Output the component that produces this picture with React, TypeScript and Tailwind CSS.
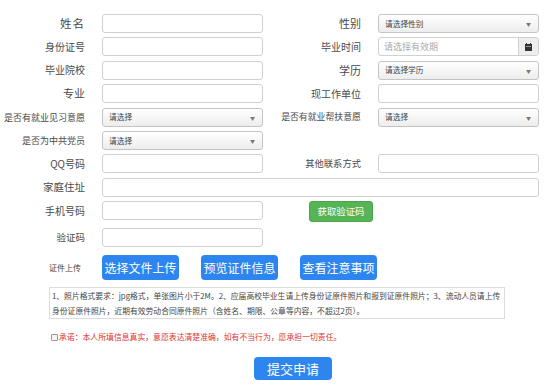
import React from 'react';

const FONT = { fontFamily: '"Noto Sans CJK SC", "Noto Sans", sans-serif' };

function Label({ text, size = 'text-[10px]', width = 'w-[85px]' }: { text: string; size?: string; width?: string }) {
  return (
    <div className={`${width} shrink-0 text-right whitespace-nowrap text-[#4a4a4a] leading-none ${size}`}>{text}</div>
  );
}

function TextInput({ width = 'w-[161px]' }: { width?: string }) {
  return <div className={`${width} h-[19px] shrink-0 ml-[17px] rounded-[3px] border border-[#d0d0d0] bg-white`} />;
}

function Select({ text }: { text: string }) {
  return (
    <div className="w-[161px] h-[19px] shrink-0 ml-[17px] rounded-[3px] border border-[#c4c4c4] bg-gradient-to-b from-white to-[#ededed] flex items-center justify-between pl-[6px] pr-[7px]">
      <span className="text-[7.7px] text-[#444] leading-none">{text}</span>
      <span className="text-[5px] text-[#777] leading-none">▼</span>
    </div>
  );
}

function DateInput() {
  return (
    <div className="w-[161px] h-[19px] shrink-0 ml-[17px] rounded-[3px] border border-[#d0d0d0] bg-white flex items-center overflow-hidden">
      <span className="flex-1 pl-[5px] text-[9px] text-[#aaa] leading-none">请选择有效期</span>
      <div className="w-[20px] h-full bg-[#eee] border-l border-[#d0d0d0] flex items-center justify-center">
        <svg width="7" height="8" viewBox="0 0 7 8">
          <rect x="0" y="1" width="7" height="7" fill="#333" />
          <rect x="1" y="0" width="1" height="2" fill="#333" />
          <rect x="5" y="0" width="1" height="2" fill="#333" />
          <rect x="1" y="3" width="5" height="0.6" fill="#ddd" />
        </svg>
      </div>
    </div>
  );
}

function BlueButton({ text }: { text: string }) {
  return (
    <div className="w-[77px] h-[25px] rounded-[4px] bg-[#2d86ef] text-white text-[12px] flex items-center justify-center leading-none whitespace-nowrap">
      {text}
    </div>
  );
}

export default function App() {
  return (
    <div className="w-[550px] h-[386px] bg-white overflow-hidden" style={FONT}>
      <div className="pt-[14px] flex flex-col gap-[4.4px]">
        <div className="flex items-center h-[19px]">
          <Label text="姓名" size="text-[11.5px] tracking-[1px]" />
          <TextInput />
          <Label text="性别" size="text-[11px]" width="w-[98px]" />
          <Select text="请选择性别" />
        </div>
        <div className="flex items-center h-[19px]">
          <Label text="身份证号" />
          <TextInput />
          <Label text="毕业时间" width="w-[98px]" />
          <DateInput />
        </div>
        <div className="flex items-center h-[19px]">
          <Label text="毕业院校" />
          <TextInput />
          <Label text="学历" size="text-[11px]" width="w-[98px]" />
          <Select text="请选择学历" />
        </div>
        <div className="flex items-center h-[19px]">
          <Label text="专业" size="text-[11px]" />
          <TextInput />
          <Label text="现工作单位" width="w-[98px]" />
          <TextInput />
        </div>
        <div className="flex items-center h-[19px]">
          <Label text="是否有就业见习意愿" size="text-[9px]" />
          <Select text="请选择" />
          <Label text="是否有就业帮扶意愿" size="text-[8.9px]" width="w-[98px]" />
          <Select text="请选择" />
        </div>
        <div className="flex items-center h-[19px]">
          <Label text="是否为中共党员" size="text-[9px]" />
          <Select text="请选择" />
        </div>
        <div className="flex items-center h-[19px]">
          <Label text="QQ号码" size="text-[10px]" />
          <TextInput />
          <Label text="其他联系方式" size="text-[9.3px]" width="w-[98px]" />
          <TextInput />
        </div>
        <div className="flex items-center h-[19px]">
          <Label text="家庭住址" size="text-[10.5px]" />
          <TextInput width="w-[437px]" />
        </div>
        <div className="flex items-start h-[21px]">
          <div className="h-[19px] flex items-center">
            <Label text="手机号码" />
          </div>
          <TextInput />
          <div className="ml-[46px] w-[64px] h-[21px] rounded-[3px] bg-[#56b356] border border-[#4aa54a] text-white text-[9.4px] flex items-center justify-center leading-none">
            获取验证码
          </div>
        </div>
        <div className="flex items-center h-[19px] mt-[1.5px]">
          <Label text="验证码" size="text-[9.5px]" />
          <TextInput />
        </div>
      </div>

      <div className="pl-[49px] mt-[8.4px]">
        <div className="flex items-center h-[25px]">
          <div className="w-[53px] text-[8px] text-[#444] leading-none">证件上传</div>
          <div className="flex gap-[22px]">
            <BlueButton text="选择文件上传" />
            <BlueButton text="预览证件信息" />
            <BlueButton text="查看注意事项" />
          </div>
        </div>

        <div className="mt-[7px] w-[456px] border border-[#dcdcdc] pl-[2px] text-[7.8px] leading-[15px] text-[#444] whitespace-nowrap overflow-hidden">
          1、照片格式要求：jpg格式，单张图片小于2M。2、应届高校毕业生请上传身份证原件照片和报到证原件照片；3、流动人员请上传
          <br />
          身份证原件照片，近期有效劳动合同原件照片（含姓名、期限、公章等内容，不超过2页）。
        </div>

        <div className="mt-[13px] flex items-center h-[10px]">
          <div className="w-[7px] h-[7px] ml-[2px] border border-[#999] rounded-[1px] bg-[#f4f4f4]" />
          <span className="ml-[1px] text-[7.85px] text-[#d33] leading-none">
            承诺：本人所填信息真实，意愿表达清楚准确，如有不当行为，愿承担一切责任。
          </span>
        </div>
      </div>

      <div className="mt-[15px] ml-[254px] w-[78px] h-[23px] rounded-[4px] bg-[#2d86ef] text-white text-[13px] flex items-center justify-center leading-none">
        提交申请
      </div>
    </div>
  );
}
